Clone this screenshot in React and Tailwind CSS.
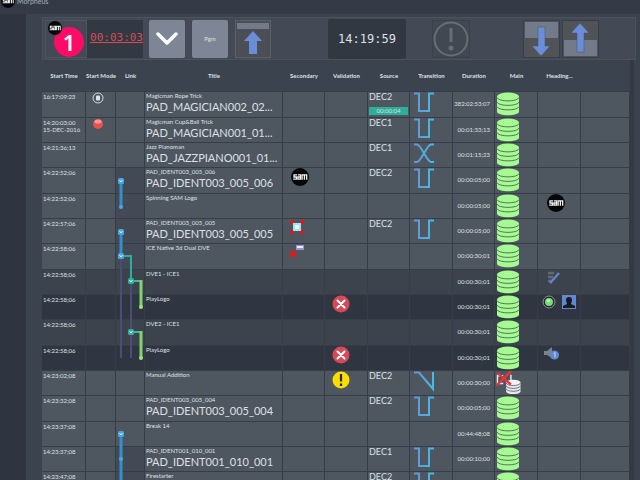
const rows = [
    { time: '16:17:09:23', mode: 'pause', note: 'Magicman Rope Trick', title: 'PAD_MAGICIAN002_02...', source: 'DEC2', tag: '00:00:04', transition: 'cut', duration: '382:02:53:07' },
    { time: '14:20:03;00', date: '15-DEC-2016', mode: 'record', note: 'Magicman Cup&Ball Trick', title: 'PAD_MAGICIAN001_01...', source: 'DEC1', transition: 'cut', duration: '00:01:33;13' },
    { time: '14:21:36;13', note: 'Jazz Pianoman', title: 'PAD_JAZZPIANO001_01...', source: 'DEC1', transition: 'cross', duration: '00:01:15;23' },
    { time: '14:22:52;06', linked: true, note: 'PAD_IDENT003_005_006', title: 'PAD_IDENT003_005_006', secondary: 'sam', source: 'DEC2', transition: 'cut', duration: '00:00:05;00' },
    { time: '14:22:52;06', linked: true, note: 'Spinning SAM Logo', heading: 'sam', duration: '00:00:05;00' },
    { time: '14:22:57;06', linked: true, note: 'PAD_IDENT003_005_005', title: 'PAD_IDENT003_005_005', secondary: 'key', source: 'DEC2', transition: 'cut', duration: '00:00:05;00' },
    { time: '14:22:58;06', linked: true, note: 'ICE Native 3d Dual DVE', secondary: 'dve', duration: '00:00:30;01' },
    { time: '14:22:58;06', shade: 'mid', note: 'DVE1 - ICE1', heading: 'edit', duration: '00:00:30;01' },
    { time: '14:22:58;06', shade: 'dark', note: 'PlayLogo', validation: 'error', heading: 'person', duration: '00:00:30;01' },
    { time: '14:22:58;06', shade: 'mid', note: 'DVE2 - ICE1', duration: '00:00:30;01' },
    { time: '14:22:58;06', shade: 'dark', note: 'PlayLogo', validation: 'error', heading: 'audio', duration: '00:00:30;01' },
    { time: '14:23:02;08', note: 'Manual Addition', validation: 'warning', source: 'DEC2', transition: 'slope', duration: '00:00:30;00', missing: true },
    { time: '14:23:32;08', note: 'PAD_IDENT003_005_004', title: 'PAD_IDENT003_005_004', source: 'DEC2', transition: 'cut', duration: '00:00:05;00' },
    { time: '14:23:37;08', note: 'Break 14', duration: '00:44:48;08' },
    { time: '14:23:37;08', linked: true, note: 'PAD_IDENT001_010_001', title: 'PAD_IDENT001_010_001', source: 'DEC1', transition: 'cut', duration: '00:00:10;00' },
    { time: '14:23:47;08', linked: true, note: 'Firestarter', source: 'DEC2', transition: 'cut' },
]

const shades = {
    light: 'bg-[#4e5660]',
    mid: 'bg-[#3c434d]',
    dark: 'bg-[#303641]',
}

const transitions = {
    cut: 'M1 1.5H6V19H16V1.5H21',
    cross: 'M1 1.5H4C8 1.5 14 19 18 19H21M1 19H4C8 19 14 1.5 18 1.5H21',
    slope: 'M1 1.5H6L20 18V1',
}

function SamLogo({ className }) {
    return (
        <svg viewBox="0 0 18 18" className={className} role="img" aria-label="SAM">
            <circle cx="9" cy="9" r="9" fill="#050607" />
            <g fill="none" stroke="#f4f4f4" strokeWidth="1.3">
                <path d="M6 6.9H3V9h2.6v2.2H2.2" />
                <path d="M6.8 6.9h2.8v4.3H7V9h2.6" />
                <path d="M11.1 11.8V6.9h4.6v4.9M13.4 7v4.8" />
            </g>
        </svg>
    )
}

function Discs() {
    return (
        <svg viewBox="0 0 24 24" className="size-6" aria-hidden="true">
            <path d="M1 4.5v15c0 5 22 5 22 0v-15" fill="#a5fa91" />
            <ellipse cx="12" cy="4.5" rx="11" ry="4" fill="#a5fa91" />
            <path
                d="M1 5.5c1 4.5 21 4.5 22 0M1 10c1 4.5 21 4.5 22 0M1 14.5c1 4.5 21 4.5 22 0"
                fill="none"
                stroke="#55785a"
                strokeWidth="1"
            />
        </svg>
    )
}

function MissingDiscs() {
    return (
        <svg viewBox="0 0 26 25" className="h-6 w-[26px]" aria-hidden="true">
            <path d="M1 4v10M1 5h6M1 13h6M15 4v6" stroke="#eeeeee" strokeWidth="1.5" fill="none" />
            <path d="M10 12v9c0 4 15 4 15 0v-9" fill="#e8e8ea" />
            <ellipse cx="17.5" cy="12" rx="7.5" ry="3" fill="#f2f2f4" />
            <path
                d="M10 12.5c1 3.5 14 3.5 15 0M10 15.500c1 3.5 14 3.5 15 0M10 18.500c1 3.5 14 3.5 15 0"
                fill="none"
                stroke="#6b7079"
            />
            <path d="M1 2c4 4 9 8 14 12M15 0C10 6 5 10 0 15" stroke="#e8323c" strokeWidth="2.5" fill="none" />
        </svg>
    )
}

function Transition({ type }) {
    return (
        <svg viewBox="0 0 22 21" className="ml-[3px] h-[21px] w-[22px]" aria-hidden="true">
            <defs>
                <linearGradient id={`line-${type}`} gradientUnits="userSpaceOnUse" x1="0" y1="0" x2="22" y2="0">
                    <stop offset="0" stopColor="#6c8fd6" />
                    <stop offset="1" stopColor="#3fc0e6" />
                </linearGradient>
            </defs>
            <path d={transitions[type]} fill="none" stroke={`url(#line-${type})`} strokeWidth="2" />
        </svg>
    )
}

function ModeIcon({ type }) {
    if (type === 'record') {
        return (
            <svg viewBox="0 0 12 12" className="ml-1.5 size-3" role="img" aria-label="Record">
                <circle cx="6" cy="6" r="5" fill="#e8514c" />
                <ellipse cx="6" cy="3.5" rx="3.5" ry="2" fill="#f59a90" />
            </svg>
        )
    }
    return (
        <svg viewBox="0 0 12 12" className="ml-1.5 size-3" role="img" aria-label="Hold">
            <circle cx="6" cy="6" r="5" fill="none" stroke="#d6d9dd" />
            <rect x="4" y="3.5" width="4" height="5" rx="1" fill="#dfe2e5" />
        </svg>
    )
}

function ValidationIcon({ type }) {
    if (type === 'warning') {
        return (
            <svg viewBox="0 0 18 18" className="size-[18px]" role="img" aria-label="Warning">
                <circle cx="9" cy="9" r="8.5" fill="#fbdc05" />
                <path d="M9 3v7.5M9 12.5v2.5" stroke="#25262a" strokeWidth="2.2" />
            </svg>
        )
    }
    return (
        <svg viewBox="0 0 18 18" className="size-[18px]" role="img" aria-label="Error">
            <circle cx="9" cy="9" r="8.5" fill="#d64a57" />
            <path d="M5.5 5.5l7 7M12.5 5.5l-7 7" stroke="#ffffff" strokeWidth="2" strokeLinecap="round" />
        </svg>
    )
}

function SecondaryIcon({ type }) {
    if (type === 'sam') return <SamLogo className="ml-2 size-[18px]" />
    if (type === 'key') {
        return (
            <svg viewBox="0 0 16 16" className="ml-1.5 size-4" aria-hidden="true">
                <path d="M3 3l10 10M13 3L3 13" stroke="#77566a" />
                <path d="M1 1h4v4H1zM11 1h4v4h-4zM1 11h4v4H1zM11 11h4v4h-4z" fill="#cb1f22" />
                <rect x="4" y="4" width="8" height="8" fill="#a9e0f0" />
                <rect x="6" y="6" width="4" height="4" fill="#e6fafd" />
            </svg>
        )
    }
    return (
        <svg viewBox="0 0 16 16" className="ml-1.5 size-4" aria-hidden="true">
            <rect x="1" y="7" width="6" height="6" fill="#d91d1d" />
            <rect x="7" y="1" width="8" height="5" fill="#8f93d8" />
            <path d="M8 3h6" stroke="#ebecff" strokeWidth="2" />
        </svg>
    )
}

function HeadingIcon({ type }) {
    if (type === 'sam') return <SamLogo className="ml-[9px] size-[18px]" />
    if (type === 'edit') {
        return (
            <svg viewBox="0 0 14 14" className="ml-2 size-3.5" aria-hidden="true">
                <path d="M2 3h6M2 7h5M2 11h4" stroke="#646a74" strokeWidth="2.5" />
                <path d="M13 3L5.5 11.500L4 13" stroke="#5f84cc" strokeWidth="2.5" />
            </svg>
        )
    }
    if (type === 'person') {
        return (
            <div className="ml-1 flex items-center gap-1.5">
                <svg viewBox="0 0 14 14" className="size-3.5" aria-hidden="true">
                    <circle cx="7" cy="7" r="6" fill="#242a31" stroke="#8c929a" />
                    <circle cx="7" cy="7" r="4" fill="#7cdb74" />
                    <ellipse cx="6.5" cy="5.5" rx="2" ry="1.5" fill="#b9f3b1" />
                </svg>
                <svg viewBox="0 0 14 14" className="size-3.5" aria-hidden="true">
                    <rect width="14" height="14" fill="#6288cf" />
                    <path d="M7 2a3 3 0 0 1 3 3c0 2-1 3-1 4l4 2v2H1v-2l4-2c0-1-1-2-1-4a3 3 0 0 1 3-3z" fill="#171b22" />
                </svg>
            </div>
        )
    }
    return (
        <svg viewBox="0 0 16 14" className="ml-1.5 h-3.5 w-4" aria-hidden="true">
            <path d="M0 5h3l5-4v11L3 9H0z" fill="#7c828b" />
            <circle cx="10.5" cy="9" r="4.5" fill="#6189d2" />
            <path d="M9.5 7.5l1.5-1v5" stroke="#c5d6f5" fill="none" />
        </svg>
    )
}

function LinkNode({ x, y, color }) {
    return (
        <g>
            <rect x={x - 3} y={y - 3} width="6" height="6" rx="1.5" fill={color} />
            <path d={`M${x - 1.5} ${y - 1}l1.5 2l1.5-2`} fill="none" stroke="#d8f2f8" />
        </g>
    )
}

// Link tree, spans every row from the first one down
function LinkTree() {
    return (
        <svg viewBox="0 0 29 406" className="pointer-events-none absolute top-0 left-0 h-[406px] w-[29px]" aria-hidden="true">
            <g fill="none" strokeWidth="2">
                <path d="M5 164V266M15 189V266" stroke="#4b4d75" />
                <path d="M5 89V115M5 140V164M5 342V406" stroke="#348fcf" strokeWidth="3" />
                <path d="M5 164H15V189" stroke="#2cae9f" />
                <path d="M15 189H25M15 240H25" stroke="#45b98a" />
                <path d="M25 188V214M25 239V265" stroke="#83d471" strokeWidth="3" />
            </g>
            <LinkNode x={5} y={89} color="#4aa5e0" />
            <LinkNode x={5} y={140} color="#4aa5e0" />
            <LinkNode x={5} y={164} color="#4aa5e0" />
            <LinkNode x={5} y={342} color="#4aa5e0" />
            <LinkNode x={15} y={189} color="#2fae98" />
            <LinkNode x={15} y={240} color="#2fae98" />
            <circle cx="5" cy="115" r="2" fill="#4aa5e0" />
            <circle cx="5" cy="367" r="2" fill="#4aa5e0" />
            <circle cx="25" cy="215" r="2" fill="#a0e37a" />
            <circle cx="25" cy="266" r="2" fill="#a0e37a" />
        </svg>
    )
}

function Row({ row, first }) {
    const cell = 'border-t border-r border-[#363d47] p-0 align-top'
    return (
        <tr className={`h-[25px] nth-[3n+1]:h-[26px] ${shades[row.shade || 'light']}`}>
            <td className={cell}>
                <div className="pt-px pl-px text-[6px] leading-[7px] whitespace-nowrap">
                    <div>{row.time}</div>
                    <div>{row.date}</div>
                </div>
            </td>
            <td className={cell}>{row.mode && <ModeIcon type={row.mode} />}</td>
            <td className={`${cell} ${first ? 'relative' : ''} ${row.linked ? 'bg-[#434a55]' : ''}`}>
                {first && <LinkTree />}
            </td>
            <td className={cell}>
                <div className="pl-px whitespace-nowrap">
                    <div className="text-[6px] leading-[7px]">{row.note}</div>
                    <div className="text-[11px] leading-[15px]">{row.title}</div>
                </div>
            </td>
            <td className={cell}>{row.secondary && <SecondaryIcon type={row.secondary} />}</td>
            <td className={cell}>
                {row.validation && (
                    <div className="pl-[7px]">
                        <ValidationIcon type={row.validation} />
                    </div>
                )}
            </td>
            <td className={cell}>
                <div className="text-[9px] leading-[10px]">
                    <div className="pl-px">{row.source}</div>
                    {row.tag && (
                        <div className="mx-px mt-[5px] h-2 bg-[#2fae9a] text-center text-[6px] leading-2">{row.tag}</div>
                    )}
                </div>
            </td>
            <td className={cell}>{row.transition && <Transition type={row.transition} />}</td>
            <td className={`${cell} text-right text-[6px] leading-6 whitespace-nowrap`}>
                <div className="pr-1">{row.duration}</div>
            </td>
            <td className={cell}>
                <div className="pl-px">{row.missing ? <MissingDiscs /> : <Discs />}</div>
            </td>
            <td className={`${cell} align-middle`}>{row.heading && <HeadingIcon type={row.heading} />}</td>
            <td className={cell}></td>
        </tr>
    )
}

export default function App() {
    return (
        <div className="flex h-screen flex-col overflow-hidden bg-[#3b434e] font-['Lato',sans-serif] text-[#dde0e4]">
            <header className="flex h-3.5 shrink-0 items-start gap-0.5 overflow-hidden bg-[#343b47] pl-px">
                <SamLogo className="-mt-1.5 size-3.5" />
                <h1 className="-mt-1 text-[7px] leading-[10px] text-[#a6adb6]">Morpheus</h1>
            </header>

            <div className="flex min-h-0 flex-1">
                <aside className="w-[26px] shrink-0 bg-[#2e3540]"></aside>

                <main className="min-w-0 flex-1 pr-1 pl-4">
                    <div className="mt-[3px] flex h-[43px] items-center border border-[#4b525c] bg-[#434a55] pl-0.5">
                        <div className="relative h-[38px] w-[42px] shrink-0 border border-[#4e555f]">
                            <div className="absolute top-1.5 left-2 flex size-[30px] items-center justify-center rounded-full bg-[#fb0c66] font-['Noto_Sans',sans-serif] text-[22px] leading-none font-semibold text-white">
                                1
                            </div>
                            <SamLogo className="absolute top-0 left-0.5 size-3.5" />
                        </div>
                        <div className="flex h-[38px] w-14 shrink-0 items-center justify-end bg-[#323943] font-['DejaVu_Sans_Mono',monospace] text-[11px] text-[#d94a52] underline">
                            00:03:03
                        </div>
                        <button aria-label="Expand" className="ml-1.5 flex h-[38px] w-9 shrink-0 items-center justify-center rounded-xs bg-[#7e8595]">
                            <svg viewBox="0 0 22 14" className="h-3.5 w-[22px]" fill="none" stroke="#ffffff" strokeWidth="3.5">
                                <path d="M2 2l9 9l9-9" strokeLinejoin="round" strokeLinecap="round" />
                            </svg>
                        </button>
                        <button className="ml-[7px] h-[38px] w-9 shrink-0 rounded-xs bg-[#7e8595] text-[6px]">Pgm</button>
                        <button aria-label="Move to top" className="ml-[7px] h-[38px] w-9 shrink-0 border border-[#596068] bg-[#4b4f55]">
                            <svg viewBox="0 0 34 36" className="h-full w-full">
                                <rect x="1" y="2" width="32" height="6" fill="#737a89" />
                                <path d="M17 10l9 10h-5v13h-8V20H8z" fill="#6b8cd6" />
                            </svg>
                        </button>
                        <div className="ml-[57px] flex h-10 w-[78px] shrink-0 items-center justify-center rounded-xs bg-[#313842] font-['DejaVu_Sans_Mono',monospace] text-xs">
                            14:19:59
                        </div>
                        <button aria-label="Alerts" className="ml-[26px] flex h-[38px] w-[38px] shrink-0 items-center justify-center border border-[#3a414b] bg-[#414852]">
                            <svg viewBox="0 0 36 36" className="size-9" fill="none" stroke="#666d74">
                                <circle cx="18" cy="18" r="16.5" strokeWidth="2" />
                                <path d="M18 7v14" strokeWidth="3" />
                                <circle cx="18" cy="27" r="2.5" fill="#666d74" stroke="none" />
                            </svg>
                        </button>
                        <div className="mr-9 ml-auto flex shrink-0 gap-0.5">
                            <button aria-label="Move down" className="h-[38px] w-[37px] border border-[#393f48] bg-[#515457]">
                                <svg viewBox="0 0 35 36" className="h-full w-full">
                                    <rect x="1" y="1" width="33" height="16" fill="#737a89" />
                                    <path d="M14 6h7v19h5l-9 10l-9-10h6z" fill="#6b8cd6" stroke="#46536e" strokeWidth="0.5" />
                                </svg>
                            </button>
                            <button aria-label="Move up" className="h-[38px] w-[37px] border border-[#393f48] bg-[#515457]">
                                <svg viewBox="0 0 35 36" className="h-full w-full">
                                    <rect x="1" y="19" width="33" height="16" fill="#737a89" />
                                    <path d="M14 31h7V12h5L17 2L8 12h6z" fill="#6b8cd6" stroke="#46536e" strokeWidth="0.5" />
                                </svg>
                            </button>
                        </div>
                    </div>

                    <div className="mr-0.5 border-r-4 border-[#343a43]">
                        <table className="w-full table-fixed border-separate border-spacing-0">
                            <colgroup>
                                <col className="w-11" />
                                <col className="w-[30px]" />
                                <col className="w-[29px]" />
                                <col />
                                <col className="w-[42px]" />
                                <col className="w-[43px]" />
                                <col className="w-[42px]" />
                                <col className="w-[43px]" />
                                <col className="w-[42px]" />
                                <col className="w-[43px]" />
                                <col className="w-[43px]" />
                                <col className="w-[49px]" />
                            </colgroup>
                            <thead>
                                <tr className="h-[31px] text-[6px] whitespace-nowrap">
                                    <th className="p-0">Start Time</th>
                                    <th className="p-0">Start Mode</th>
                                    <th className="p-0">Link</th>
                                    <th className="p-0">Title</th>
                                    <th className="p-0">Secondary</th>
                                    <th className="p-0">Validation</th>
                                    <th className="p-0">Source</th>
                                    <th className="p-0">Transition</th>
                                    <th className="p-0">Duration</th>
                                    <th className="p-0">Main</th>
                                    <th className="p-0">Heading...</th>
                                    <th className="p-0"></th>
                                </tr>
                            </thead>
                            <tbody>
                                {rows.map((row, i) => (
                                    <Row key={i} row={row} first={i === 0} />
                                ))}
                            </tbody>
                        </table>
                    </div>
                </main>
            </div>
        </div>
    )
}
